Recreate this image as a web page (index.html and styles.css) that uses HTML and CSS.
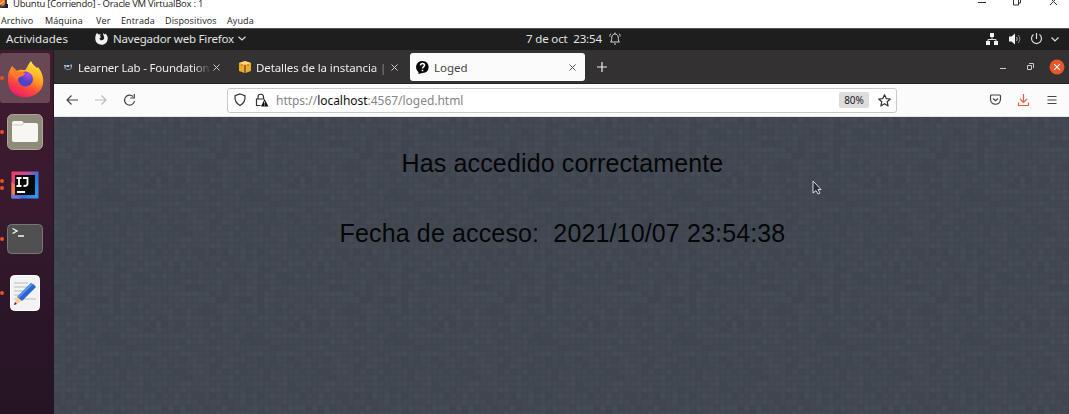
FILE: index.html
```
<!DOCTYPE html>
<html lang="es">
<head>
<meta charset="utf-8">
<title>Loged</title>
<link rel="stylesheet" href="styles.css">
</head>
<body>
<header class="host">
  <div class="host-title">
    <svg class="vm-icon" width="9" height="9" viewBox="0 0 9 9"><path fill="#3c4249" d="M0 0h7v8H0z"/><path fill="#e8792b" d="M0 0h5v4l-2 2-3-1z"/><path stroke="#f6c69b" d="M0 4l4-3"/><path fill="#222" d="M5 4h3v4H2V7h3z"/></svg>
    <span class="host-name">Ubuntu [Corriendo] - Oracle VM VirtualBox : 1</span>
    <svg class="host-controls" width="90" height="10" viewBox="0 0 90 10" fill="none" stroke="#333"><path d="M4 2.500h8M39.500-2v7h5v-7M44.500 3h2V-2M76 5l7-7M76-2l7 7"/></svg>
  </div>
  <nav class="host-menu"><span class="m1">Archivo</span><span class="m2">Máquina</span><span class="m3">Ver</span><span class="m4">Entrada</span><span class="m5">Dispositivos</span><span class="m6">Ayuda</span></nav>
</header>
<div class="topbar">
  <span class="activities">Actividades</span>
  <svg class="ff-mono" width="13" height="13" viewBox="0 0 13 13"><path fill="#f2f2f2" d="M2 1l1.800 1.500L6 2.300 4.800 4l1.300 1-1.600 1.200c.3 3 4.800 2.700 4.700-.4 0-1.800-1.400-2.400-1-4.800l1.600 1.500.6-.8C12.300 3 13 5 12.700 7.200 11.600 15 .4 14.300.3 6.500.3 4 .8 2.300 2 1z"/></svg>
  <span class="app-name">Navegador web Firefox</span>
  <svg class="chev" width="8" height="5" viewBox="0 0 8 5" fill="none" stroke="#ddd" stroke-width="1.200"><path d="M.5.700L4 4 7.500.700"/></svg>
  <span class="clock">7 de oct&nbsp; 23:54</span>
  <svg class="bell" width="12" height="13" viewBox="0 0 12 13" fill="none" stroke="#d5d5d5"><path d="M1.500 10c1.500-1 1-3 1.300-5C3.200 1 8.800 1 9.200 5c.3 2-.2 4 1.300 5zM5 12h2M6 .5V2M.8 4.500c0-1.500.5-2.500 1.300-3M11.200 4.500c0-1.500-.5-2.500-1.300-3"/></svg>
  <svg class="tray" width="74" height="14" viewBox="0 0 74 14"><g fill="#f2f2f2"><path d="M4 1h4v4H4zM0 9h4v4H0zM8 9h4v4H8z"/><path fill="none" stroke="#ddd" d="M6 5v2.500M2 9.500v-2h8v2"/><path d="M23 4.500h2.500L29 1.500v11l-3.500-3H23z"/></g><g fill="none" stroke="#bbb"><path d="M30.500 5q1.500 2 0 4"/><path stroke="#888" d="M32.500 3q3 4 0 8"/><path stroke="#ddd" stroke-width="1.200" d="M50.500 1v6M47.500 2.600a5 5 0 1 0 6 0M65.500 5.500L69 9l3.500-3.500"/></g></svg>
</div>
<div class="desktop">
  <aside class="dock">
    <div class="app active"><i class="dot"></i>
      <svg width="37" height="38" viewBox="0 0 37 38">
        <defs><linearGradient id="fire" x1=".8" y1="0" x2=".3" y2="1"><stop offset="0" stop-color="#fff04a"/><stop offset=".4" stop-color="#ffa51f"/><stop offset=".7" stop-color="#ff493c"/><stop offset="1" stop-color="#ef196f"/></linearGradient><radialGradient id="globe" cx=".7" cy=".2"><stop offset="0" stop-color="#b34bed"/><stop offset="1" stop-color="#5142c9"/></radialGradient></defs>
        <path fill="url(#fire)" d="M5 7l5 5c3-2 6-1 8-1 2-2 3-6 6-9 1 3 4 5 6 7l1-1c4 5 6 11 5 17-3 16-28 18-34 3C0 20 1 13 3 11z"/>
        <circle cx="18.500" cy="20" r="7.500" fill="url(#globe)"/>
        <path fill="#ff7b2c" d="M5 8l6 5c3-1 5 0 7 1 0 2-2 3-5 4-2 1-3 2-3 3-3-2-5-7-5-13z"/>
        <path fill="#ffc33a" d="M19 11c3-1 8 1 9 6-4-3-6-3-9-6z"/>
      </svg></div>
    <div class="app files"><i class="dot"></i>
      <svg width="36" height="36" viewBox="0 0 36 36"><rect x=".5" y=".5" width="35" height="35" rx="5" fill="#8e8b7b" stroke="#aaa698"/><path d="M5 9q0-2 2-2h8l2 2h12q2 0 2 2v15q0 2-2 2H7q-2 0-2-2z" fill="#f7f6f3"/><path d="M5 11h10l2-2" fill="none" stroke="#d2cfc5"/></svg></div>
    <div class="app idea"><i class="dot up"></i><i class="dot down"></i>
      <svg width="28" height="28" viewBox="0 0 28 28"><defs><linearGradient id="ij" x2="1" y2=".7"><stop offset="0" stop-color="#fb3269"/><stop offset=".4" stop-color="#c64d91"/><stop offset=".75" stop-color="#2878ea"/><stop offset="1" stop-color="#3293ef"/></linearGradient></defs><path fill="url(#ij)" d="M.5.500h27v27H.5z"/><path fill="#f27b43" d="M.5 11L4 14v10l-3.500 3z"/><path fill="#5f79dc" d="M.5 23l5 2 5 2.500H.5z"/><path fill="#090909" d="M4 4h20v20H4z"/><path fill="none" stroke="#fff" stroke-width="1.800" d="M5.500 7h5M8 7v8M5.500 15h5M12 7h4.500v6q0 2-4 2M6 21h8"/></svg></div>
    <div class="app term"><i class="dot"></i>
      <svg width="36" height="30" viewBox="0 0 36 30"><rect x=".5" y=".5" width="35" height="29" rx="4" fill="#505050" stroke="#777"/><path d="M5.500 4.500L10 7l-4.500 2.500M11 12h6" fill="none" stroke="#f4f4f4" stroke-width="1.400"/></svg></div>
    <div class="app editor"><i class="dot"></i>
      <svg width="30" height="36" viewBox="0 0 30 36"><rect x=".5" y=".5" width="29" height="35" rx="4" fill="#f3f3f3" stroke="#fff"/><path stroke="#bbb" stroke-width="1.200" d="M4 8h14M4 12h16M4 16h12M4 20h10M4 24h22"/><path fill="#2d63cf" d="M21 8q3 1 5 4L12 26l-5-4z"/><path fill="#5994ec" d="M21 8l2 1.500L9 23l-2-1z"/><path fill="#ffc894" d="M7 22l5 4-8 4z"/><path fill="#333" d="M5 27l2 2-3 1z"/></svg></div>
  </aside>
  <main class="browser">
    <div class="tabs">
      <div class="tab t1"><svg width="10" height="10" viewBox="0 0 10 10"><rect width="10" height="10" rx="2" fill="#263446"/><path d="M1 3.500h2v1.500H1M4 3l.5 2L5 3l.5 2L6 3M9 3H7.500L9 5H7.500" fill="none" stroke="#d8dde2" stroke-width=".8"/><path d="M1.500 6.500q3.500 2.500 7 0" fill="none" stroke="#b48b51"/></svg><span class="label">Learner Lab - Foundation</span><svg class="x" width="7" height="7" viewBox="0 0 7 7"><path d="M.5.500l6 6M6.500.500l-6 6"/></svg></div>
      <div class="tab t2"><svg width="12" height="12" viewBox="0 0 12 12"><path fill="#edaa2b" d="M0 2l5.500-1.800V12L0 10zM6.500.200L12 2v8l-5.500 2z"/><path fill="#ffd475" d="M0 2L6 0l6 2-6 2z"/><path stroke="#a66b12" stroke-width=".8" d="M6 4v8M3 3v2M9 3v2"/></svg><span class="label">Detalles de la instancia | E</span><svg class="x" width="7" height="7" viewBox="0 0 7 7"><path d="M.5.500l6 6M6.500.500l-6 6"/></svg></div>
      <div class="tab t3"><svg width="13" height="13" viewBox="0 0 13 13"><path fill="#060606" d="M6.500 0c8 0 8.500 12 0 12L2.500 13v-2C-2 7.500 0 0 6.500 0z"/><path fill="none" stroke="#fff" stroke-width="1.600" d="M4.500 4.500c.2-3 4.300-2.200 4 0C8.300 5.800 6.500 5.700 6.500 7.500M6.500 8.700v1.500"/></svg><span class="label">Loged</span><svg class="x" width="7" height="7" viewBox="0 0 7 7"><path d="M.5.500l6 6M6.500.500l-6 6"/></svg></div>
      <svg class="plus" width="10" height="10" viewBox="0 0 10 10"><path d="M5 0v10M0 5h10" stroke="#eee" stroke-width="1.200"/></svg>
      <svg class="winctl" width="66" height="16" viewBox="0 0 66 16" fill="none"><path stroke="#ccc" d="M1 9.500h6M28.500 6.500h4v4h-4zM30 4.500h4.500V9"/><circle cx="58" cy="8" r="7.500" fill="#e9562b"/><path stroke="#fff" stroke-width="1.200" d="M55.200 5.200l5.600 5.600M60.800 5.200l-5.600 5.600"/></svg>
    </div>
    <div class="nav">
      <svg class="moves" width="74" height="14" viewBox="0 0 74 14" fill="none" stroke="#444" stroke-width="1.200"><path d="M12 7H1M5.500 2.500L1 7l4.500 4.500"/><path stroke="#bbb" d="M29 7h11M35.500 2.500L40 7l-4.500 4.500"/><path d="M67 3.500A5 5 0 1 0 68.500 8M68.300 1v4h-4"/></svg>
      <div class="url">
        <svg width="34" height="14" viewBox="0 0 34 14" fill="none" stroke="#333" stroke-width="1.200"><path d="M6 1l5 1.700C11.500 8 9 11 6 12.500 3 11 .5 8 1 2.700z"/><path d="M24 6V4a2.700 2.700 0 0 1 5.500 0v2M26.500 12.500h-4V6h8"/><path fill="#111" stroke="none" d="M30.500 6l4 7.500h-7.500z"/><path stroke="#fff" stroke-width=".8" d="M30.500 8.500v2M30.500 11.500v1"/></svg>
        <span class="address">https://<b>localhost</b>:4567/loged.html</span>
        <span class="zoom">80%</span>
        <svg class="star" width="13" height="13" viewBox="0 0 13 13" fill="none" stroke="#333" stroke-width="1.200" stroke-linejoin="round"><path d="M6.500.800l1.700 3.800 4.100.4-3.100 2.800.9 4.200-3.600-2.200L2.900 12l.9-4.200L.7 5l4.100-.4z"/></svg>
      </div>
      <svg class="tools" width="70" height="14" viewBox="0 0 70 14" fill="none" stroke="#444" stroke-width="1.200"><path d="M2.500 2h8q1 0 1 1v3c0 7-10 7-10 0V3q0-1 1-1zM4 5.500l2.500 2.300L9 5.500"/><path stroke="#e1623c" d="M34.500 1v8M31 6l3.500 3.500L38 6M29.500 9.500v3h10v-3"/><path d="M58.500 3.500h9M58.500 7h9M58.500 10.500h9"/></svg>
    </div>
    <section class="page">
      <svg class="texture" width="1016" height="297" aria-hidden="true"><defs><pattern id="weave" width="144" height="144" patternUnits="userSpaceOnUse"></pattern></defs><rect width="1016" height="297" fill="url(#weave)"/></svg>
      <p class="msg first">Has accedido correctamente</p>
      <p class="msg second">Fecha de acceso:&nbsp; 2021/10/07 23:54:38</p>
      <svg class="cursor" width="10" height="16" viewBox="0 0 10 16"><path fill="#242931" stroke="#d8dce2" d="M1 1v12l3-2.500L6 14l2-1-2-3.500h3z"/></svg>
    </section>
  </main>
</div>
<script src="weave.js"></script>
</body>
</html>
```
FILE: styles.css
```
* { box-sizing: border-box; }
body { margin: 0; width: 1069px; height: 414px; overflow: hidden; display: flex; flex-direction: column; font-family: "Noto Sans", "Open Sans", sans-serif; font-size: 12px; white-space: nowrap; }
svg { display: block; flex: none; overflow: visible; }
.host { height: 28px; flex: none; background: #fff; font-family: "Open Sans", sans-serif; color: #222; }
.host-title { height: 14px; display: flex; align-items: flex-start; font-size: 9.500px; }
.host-name { margin: -4px 0 0 4px; line-height: 15px; letter-spacing: -.25px; }
.host-controls { margin-left: auto; margin-right: 5px; }
.host-menu { display: flex; height: 14px; line-height: 13px; font-size: 9px; letter-spacing: .12px; padding-left: 1px; }
.m1 { width: 44px; } .m2 { width: 51px; } .m3 { width: 25px; } .m4 { width: 44px; } .m5 { width: 62px; }
.topbar { height: 22px; flex: none; background: #1d1e1d; color: #e3e3e3; border-top: 1px solid #555; display: flex; align-items: center; padding: 0 9px 2px 6px; font-size: 11.500px; }
.activities { width: 89px; letter-spacing: .05px; }
.app-name { width: 121px; margin-left: 5px; letter-spacing: -.2px; }
.chev { margin-left: 4px; }
.clock { margin-left: 280px; width: 77px; letter-spacing: -.15px; }
.bell { margin-left: 6px; }
.tray { margin-left: auto; }
.desktop { display: flex; height: 364px; }
.dock { width: 54px; flex: none; background: linear-gradient(#421a30, #371a2d 45%, #2a1527 75%, #261424); border-right: 1px solid #241923; padding-top: 3px; }
.app { position: relative; width: 50px; height: 50px; display: grid; place-items: center; margin-bottom: 3.700px; border-radius: 3px; }
.active { background: #694855; }
.dot { position: absolute; left: 0; top: 23px; width: 4px; height: 4px; border-radius: 50%; background: #e5512b; }
.up { top: 19px; } .down { top: 26px; }
.browser { flex: 1; min-width: 0; }
.tabs { height: 34px; background: #333132; display: flex; align-items: center; color: #ededed; padding: 1px 4px 0 3px; border-bottom: 1px solid #252425; font-size: 11.500px; }
.tab { height: 28px; display: flex; align-items: center; padding-left: 6px; border-radius: 3px; }
.t1 { width: 176px; } .t2 { width: 177px; } .t3 { width: 175px; background: #fbfbfb; color: #444; }
.label { flex: 1; min-width: 0; margin-left: 5px; }
.t1 .label { letter-spacing: -.2px; }
.t2 .label { letter-spacing: -.1px; }
.t1 .label, .t2 .label { -webkit-mask-image: linear-gradient(90deg, #000 87%, transparent); mask-image: linear-gradient(90deg, #000 87%, transparent); }
.x { fill: none; stroke: #ccc; stroke-width: 1; margin-right: 9px; }
.t1 .x { margin: 0 13px 0 2px; }
.t2 .x { margin: 0 12px 0 0; }
.t3 .x { stroke: #555; }
.plus { margin-left: 12px; }
.winctl { margin-left: auto; }
.nav { height: 33px; background: #fbfbfb; display: flex; align-items: center; padding: 0 10px 0 12px; border-bottom: 1px solid #e5e5e5; }
.url { width: 670px; height: 25px; margin-left: 87px; border: 1px solid #c9c9cd; border-radius: 3px; background: #fff; display: flex; align-items: center; padding: 0 5px 0 6px; }
.address { margin-left: 8px; color: #858585; letter-spacing: -.03px; }
.address b { color: #111; font-weight: 400; }
.zoom { margin-left: auto; width: 30px; height: 16px; line-height: 16px; text-align: center; background: #dddddf; border-radius: 2px; font-size: 10px; color: #222; }
.star { margin-left: 9px; }
.tools { margin-left: auto; }
.page { position: relative; height: 297px; background: #434953; overflow: hidden; padding: 31px 0 0 2px; text-align: center; font: 25px/30px "Liberation Sans", Arial, sans-serif; letter-spacing: .14px; color: #050607; }
.texture { position: absolute; inset: 0; }
.msg { position: relative; margin: 0; }
.second { margin-top: 40px; }
.cursor { position: absolute; left: 758px; top: 63px; }
```
FILE: weave.js
```
const tile = document.getElementById("weave");
const shades = ["#404650", "#424852", "#434953", "#444a54", "#464c56"];
let seed = 7;
for (let y = 0; y < 24; y++) {
  for (let x = 0; x < 24; x++) {
    seed = (seed * 1103515 + 12345) % 2147483648;
    const cell = document.createElementNS("http://www.w3.org/2000/svg", "rect");
    cell.setAttribute("x", x * 6);
    cell.setAttribute("y", y * 6);
    cell.setAttribute("width", 6);
    cell.setAttribute("height", 6);
    cell.setAttribute("fill", shades[Math.floor(seed / 65536) % 5]);
    cell.setAttribute("stroke", "#3d434d");
    cell.setAttribute("stroke-width", ".5");
    tile.appendChild(cell);
  }
}
```
